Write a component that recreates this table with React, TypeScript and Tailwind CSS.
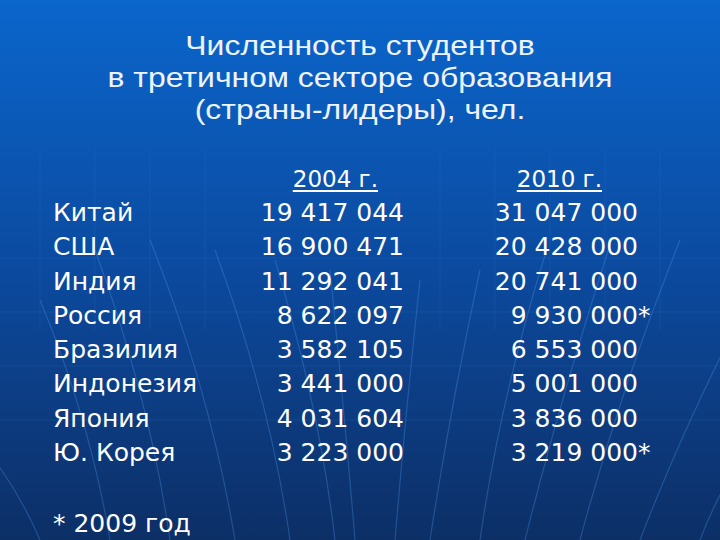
import React from 'react';

const rows: [string, string, string, boolean][] = [
  ['Китай', '19 417 044', '31 047 000', false],
  ['США', '16 900 471', '20 428 000', false],
  ['Индия', '11 292 041', '20 741 000', false],
  ['Россия', '8 622 097', '9 930 000', true],
  ['Бразилия', '3 582 105', '6 553 000', false],
  ['Индонезия', '3 441 000', '5 001 000', false],
  ['Япония', '4 031 604', '3 836 000', false],
  ['Ю. Корея', '3 223 000', '3 219 000', true],
];

function Backdrop() {
  // faint grid and the curved "meridian" lines fanning up from the bottom
  const curves = [
    'M-40 420 Q 10 470 40 540',
    'M40 300 Q 90 420 110 540',
    'M95 250 Q 150 400 170 540',
    'M150 240 Q 210 390 235 540',
    'M215 250 Q 270 400 290 540',
    'M275 260 Q 320 410 335 540',
    'M330 270 Q 345 420 355 540',
    'M420 280 Q 405 420 395 540',
    'M480 270 Q 450 410 430 540',
    'M545 255 Q 500 400 480 540',
    'M610 245 Q 560 400 525 540',
    'M680 240 Q 620 390 580 540',
    'M760 280 Q 690 410 640 540',
    'M790 400 Q 730 460 700 540',
  ];
  return (
    <svg className="absolute inset-0 w-full h-full" viewBox="0 0 720 540" fill="none">
      {[258, 312, 366, 420].map((y) => (
        <line key={y} x1="0" y1={y} x2="720" y2={y} stroke="#5a9be8" strokeOpacity="0.12" strokeWidth="1" />
      ))}
      {[40, 95, 150, 205, 440, 495, 550, 605, 660].map((x) => (
        <line key={x} x1={x} y1="150" x2={x} y2="330" stroke="#5a9be8" strokeOpacity="0.1" strokeWidth="1" />
      ))}
      {curves.map((d, i) => (
        <path key={i} d={d} stroke="#4b8ee0" strokeOpacity="0.35" strokeWidth="1.2" />
      ))}
    </svg>
  );
}

export default function App() {
  return (
    <div className="relative w-[720px] h-[540px] overflow-hidden bg-gradient-to-b from-[#0a66cc] via-[#0b4a9f] to-[#0c2f66]">
      <Backdrop />

      <div className="relative flex flex-col">
        {/* title on the slide is stretched sideways */}
        <h1 className="pt-[30px] text-center text-[28px] leading-[32px] font-normal text-[#eef4ff] scale-x-[1.14] font-['Liberation_Sans',Arial,sans-serif]">
          Численность студентов
          <br />
          в третичном секторе образования
          <br />
          (страны-лидеры), чел.
        </h1>

        <div className="mt-[40px] pl-[53px] text-white font-['DejaVu_Sans',Verdana,sans-serif]">
          <div className="grid grid-cols-[200px_151px_234px] h-[26px] mb-[4px] text-[23px] leading-[26px]">
            <div />
            <div className="text-right pr-[26px]">
              <span className="underline underline-offset-[3px] decoration-2">2004 г.</span>
            </div>
            <div className="text-right pr-[36px]">
              <span className="underline underline-offset-[3px] decoration-2">2010 г.</span>
            </div>
          </div>

          {rows.map(([name, a, b, star]) => (
            <div key={name} className="grid grid-cols-[200px_151px_234px_30px] h-[34.3px] text-[25px] leading-[34.3px]">
              <div>{name}</div>
              <div className="text-right">{a}</div>
              <div className="text-right">{b}</div>
              <div>{star ? '*' : ''}</div>
            </div>
          ))}

          <div className="mt-[37px] text-[25px] leading-[34.3px]">* 2009 год</div>
        </div>
      </div>
    </div>
  );
}
